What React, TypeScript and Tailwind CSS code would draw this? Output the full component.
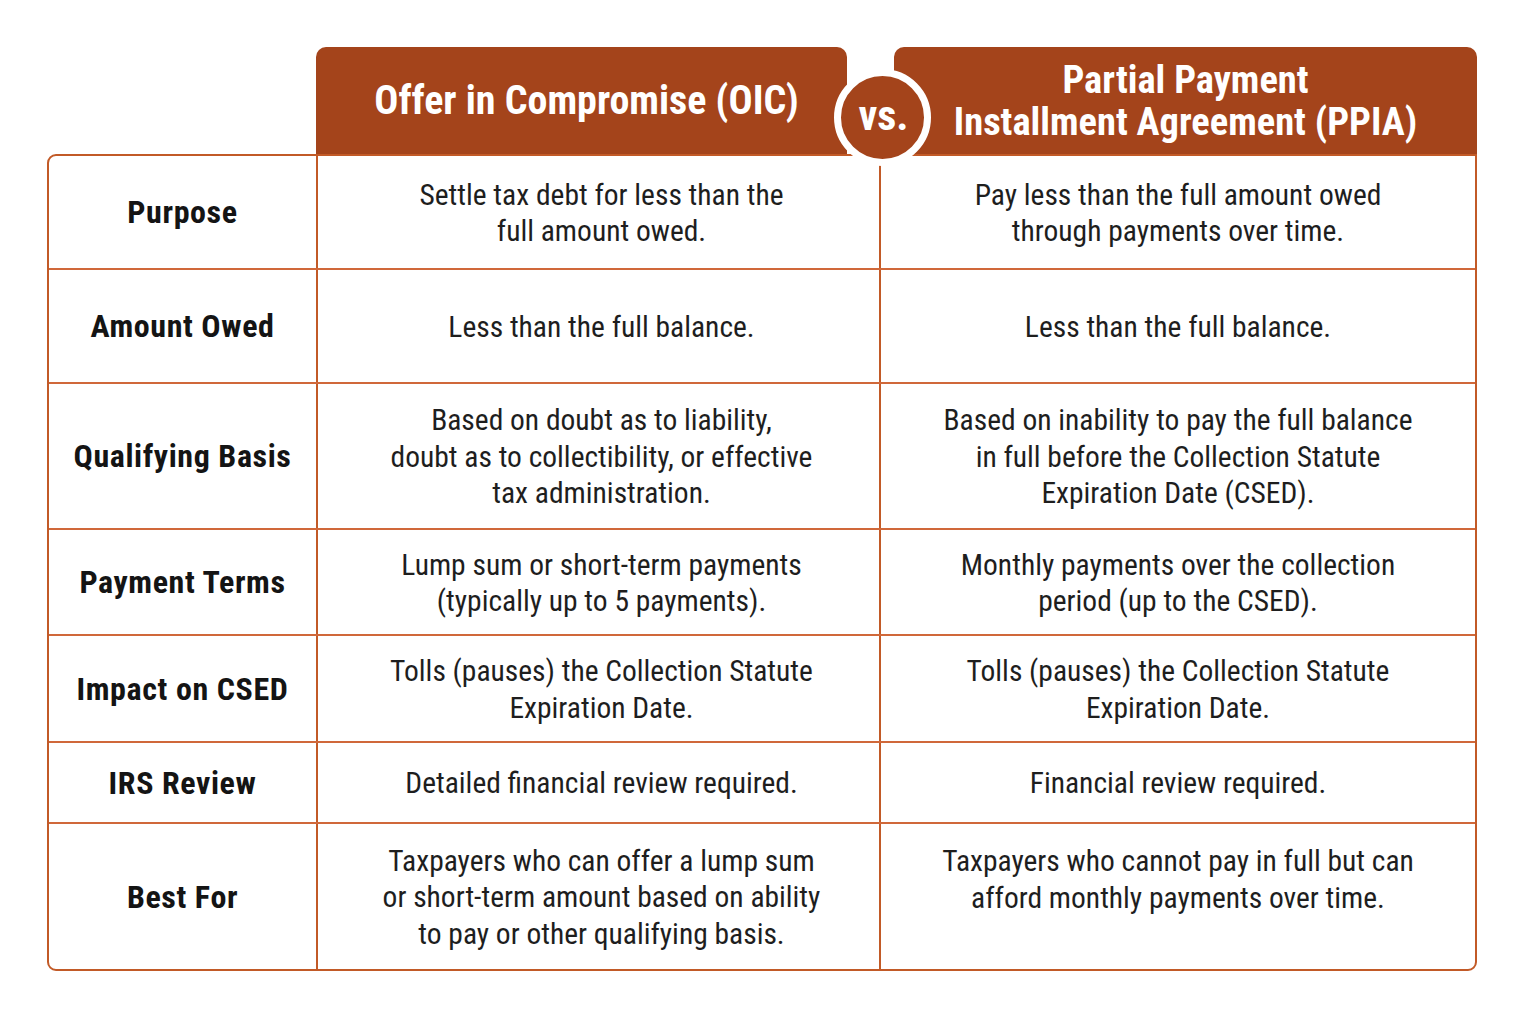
import React from 'react';

type Row = { label: string; h: string; oic: React.ReactNode; ppia: React.ReactNode; ppiaPad?: boolean };

const rows: Row[] = [
  {
    label: 'Purpose',
    h: 'h-[112px]',
    oic: (<>Settle tax debt for less than the<br />full amount owed.</>),
    ppia: (<>Pay less than the full amount owed<br />through payments over time.</>),
  },
  {
    label: 'Amount Owed',
    h: 'h-[114px]',
    oic: <>Less than the full balance.</>,
    ppia: <>Less than the full balance.</>,
  },
  {
    label: 'Qualifying Basis',
    h: 'h-[146px]',
    oic: (<>Based on doubt as to liability,<br />doubt as to collectibility, or effective<br />tax administration.</>),
    ppia: (<>Based on inability to pay the full balance<br />in full before the Collection Statute<br />Expiration Date (CSED).</>),
  },
  {
    label: 'Payment Terms',
    h: 'h-[106px]',
    oic: (<>Lump sum or short-term payments<br />(typically up to 5 payments).</>),
    ppia: (<>Monthly payments over the collection<br />period (up to the CSED).</>),
  },
  {
    label: 'Impact on CSED',
    h: 'h-[107px]',
    oic: (<>Tolls (pauses) the Collection Statute<br />Expiration Date.</>),
    ppia: (<>Tolls (pauses) the Collection Statute<br />Expiration Date.</>),
  },
  {
    label: 'IRS Review',
    h: 'h-[81px]',
    oic: <>Detailed financial review required.</>,
    ppia: <>Financial review required.</>,
  },
  {
    label: 'Best For',
    h: 'h-[147px]',
    oic: (<>Taxpayers who can offer a lump sum<br />or short-term amount based on ability<br />to pay or other qualifying basis.</>),
    ppia: (<>Taxpayers who cannot pay in full but can<br />afford monthly payments over time.</>),
    ppiaPad: true,
  },
];

export default function App() {
  return (
    <div className="min-h-screen w-full bg-white font-['Roboto_Condensed',_'Roboto',_sans-serif]">
      <div className="relative ml-[47px] w-[1430px] pt-[47px]">
        {/* header tabs */}
        <div className="flex h-[107px]">
          <div className="w-[269px] shrink-0" />
          <div className="flex w-[531px] shrink-0 items-center justify-center rounded-t-[10px] bg-[#a4441b] pl-[10px] text-[40px] font-bold text-white">
            Offer in Compromise (OIC)
          </div>
          <div className="w-[47px] shrink-0" />
          <div className="flex w-[583px] shrink-0 items-center justify-center rounded-t-[10px] bg-[#a4441b] text-center text-[38.5px] font-bold leading-[42px] text-white">
            <span>Partial Payment<br />Installment Agreement (PPIA)</span>
          </div>
        </div>

        {/* table */}
        <div className="overflow-hidden rounded-b-[9px] rounded-tl-[9px] border-2 border-[#c25a27]">
          {rows.map((r, i) => (
            <div
              key={r.label}
              className={`flex ${r.h} ${i > 0 ? 'border-t-2 border-[#d0683a]' : ''}`}
            >
              <div className="flex w-[267px] shrink-0 items-center justify-center text-[32px] font-bold tracking-[0.6px] text-[#141414]">
                {r.label}
              </div>
              <div className="flex w-[563px] shrink-0 items-center justify-center border-l-2 border-[#c25a27] pl-[6px] pt-[2px] text-center text-[29.5px] leading-[36.5px] text-[#1e1e1e]">
                <span>{r.oic}</span>
              </div>
              <div
                className={`flex flex-1 items-center justify-center border-l-2 border-[#c25a27] pt-[2px] text-center text-[29.5px] leading-[36.5px] text-[#1e1e1e] ${r.ppiaPad ? 'pb-[36px]' : ''}`}
              >
                <span>{r.ppia}</span>
              </div>
            </div>
          ))}
        </div>

        {/* vs badge */}
        <div className="absolute left-[787px] top-[69px] flex h-[97px] w-[97px] items-center justify-center rounded-full border-[7px] border-white bg-[#a4441b] text-[42px] font-bold leading-none text-white">
          <span className="-mt-[4px] pl-[2px]">vs.</span>
        </div>
      </div>
    </div>
  );
}
